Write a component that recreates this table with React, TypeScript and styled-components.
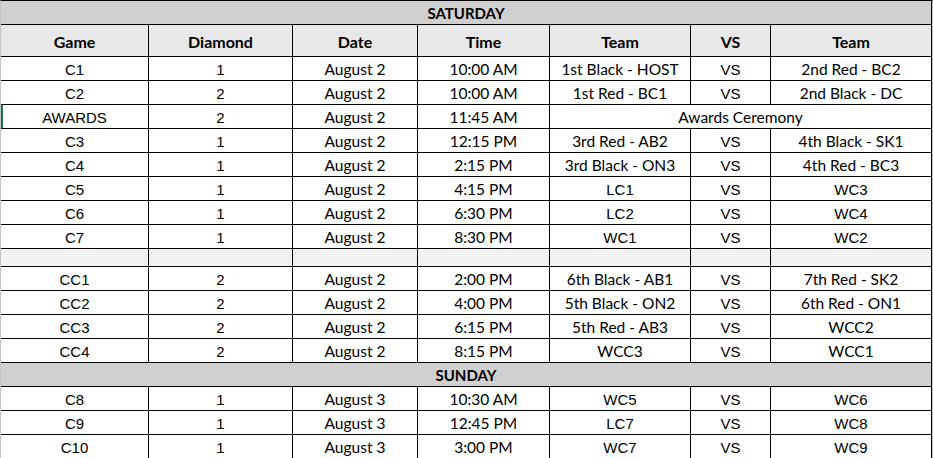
import React from "react";
import styled, { createGlobalStyle, css } from "styled-components";

const Global = createGlobalStyle`
  html, body { margin: 0; padding: 0; background: #ffffff; }
  body { overflow: hidden; }
`;

const APTOS = `"Lato", "Noto Sans", sans-serif`;
const ARIAL = `"Liberation Sans", Arial, sans-serif`;

type Face = "arial" | "aptos";

const Sheet = styled.div`
  display: grid;
  grid-template-columns: 148px 144px 125px 132px 141px 80px 161px;
  width: 933px;
  box-sizing: border-box;
  border-left: 1px solid #c4c4c4;
  border-right: 1px solid #c4c4c4;
  border-top: 1px solid #000;
  color: #000;
`;

const Cell = styled.div<{ $face: Face; $span?: number; $h: number; $mark?: boolean }>`
  box-sizing: border-box;
  height: ${(p) => p.$h}px;
  line-height: ${(p) => p.$h - 1}px;
  border-right: 1px solid #000;
  border-bottom: 1px solid #000;
  text-align: center;
  white-space: nowrap;
  overflow: hidden;
  font-family: ${(p) => (p.$face === "arial" ? ARIAL : APTOS)};
  font-size: ${(p) => (p.$face === "arial" ? "15px" : "15.5px")};
  padding-top: 1px;
  ${(p) => p.$span && css`grid-column: span ${p.$span};`}
  ${(p) =>
    p.$mark &&
    css`
      box-shadow: inset 2px 0 0 #1e7145;
    `}
`;

const Banner = styled.div`
  grid-column: 1 / -1;
  box-sizing: border-box;
  height: 24px;
  line-height: 23px;
  padding-top: 1px;
  background: #d0d0d0;
  border-right: 1px solid #000;
  border-bottom: 1px solid #000;
  text-align: center;
  font-family: ${APTOS};
  font-weight: 700;
  font-size: 15px;
`;

const HeadCell = styled.div`
  box-sizing: border-box;
  height: 32px;
  line-height: 31px;
  padding-top: 1px;
  background: #e8e8e8;
  border-right: 1px solid #000;
  border-bottom: 1px solid #000;
  text-align: center;
  font-family: ${APTOS};
  font-weight: 700;
  font-size: 16px;
`;

const Spacer = styled.div`
  box-sizing: border-box;
  height: 18px;
  background: #f2f2f2;
  border-right: 1px solid #000;
  border-bottom: 1px solid #000;
`;

type C = { t: string; f: Face; span?: number };

const code = (s: string) => /^(LC|WC)\d$/.test(s);

const game = (
  g: string,
  d: string,
  date: string,
  time: string,
  a: string,
  b: string
): C[] => [
  { t: g, f: "arial" },
  { t: d, f: "arial" },
  { t: date, f: "aptos" },
  { t: time, f: "aptos" },
  { t: a, f: code(a) ? "arial" : "aptos" },
  { t: "VS", f: "arial" },
  { t: b, f: code(b) ? "arial" : "aptos" },
];

type Row =
  | { kind: "banner"; label: string }
  | { kind: "head" }
  | { kind: "spacer" }
  | { kind: "data"; cells: C[]; mark?: boolean };

const rows: Row[] = [
  { kind: "banner", label: "SATURDAY" },
  { kind: "head" },
  { kind: "data", cells: game("C1", "1", "August 2", "10:00 AM", "1st Black - HOST", "2nd Red - BC2") },
  { kind: "data", cells: game("C2", "2", "August 2", "10:00 AM", "1st Red - BC1", "2nd Black - DC") },
  {
    kind: "data",
    mark: true,
    cells: [
      { t: "AWARDS", f: "arial" },
      { t: "2", f: "arial" },
      { t: "August 2", f: "aptos" },
      { t: "11:45 AM", f: "aptos" },
      { t: "Awards Ceremony", f: "aptos", span: 3 },
    ],
  },
  { kind: "data", cells: game("C3", "1", "August 2", "12:15 PM", "3rd Red - AB2", "4th Black - SK1") },
  { kind: "data", cells: game("C4", "1", "August 2", "2:15 PM", "3rd Black - ON3", "4th Red - BC3") },
  { kind: "data", cells: game("C5", "1", "August 2", "4:15 PM", "LC1", "WC3") },
  { kind: "data", cells: game("C6", "1", "August 2", "6:30 PM", "LC2", "WC4") },
  { kind: "data", cells: game("C7", "1", "August 2", "8:30 PM", "WC1", "WC2") },
  { kind: "spacer" },
  { kind: "data", cells: game("CC1", "2", "August 2", "2:00 PM", "6th Black - AB1", "7th Red - SK2") },
  { kind: "data", cells: game("CC2", "2", "August 2", "4:00 PM", "5th Black - ON2", "6th Red - ON1") },
  { kind: "data", cells: game("CC3", "2", "August 2", "6:15 PM", "5th Red - AB3", "WCC2") },
  { kind: "data", cells: game("CC4", "2", "August 2", "8:15 PM", "WCC3", "WCC1") },
  { kind: "banner", label: "SUNDAY" },
  { kind: "data", cells: game("C8", "1", "August 3", "10:30 AM", "WC5", "WC6") },
  { kind: "data", cells: game("C9", "1", "August 3", "12:45 PM", "LC7", "WC8") },
  { kind: "data", cells: game("C10", "1", "August 3", "3:00 PM", "WC7", "WC9") },
];

const headers = ["Game", "Diamond", "Date", "Time", "Team", "VS", "Team"];

export default function App() {
  return (
    <>
      <Global />
      <Sheet>
        {rows.map((r, i) => {
          if (r.kind === "banner") return <Banner key={i}>{r.label}</Banner>;
          if (r.kind === "head")
            return (
              <React.Fragment key={i}>
                {headers.map((h, j) => (
                  <HeadCell key={j}>{h}</HeadCell>
                ))}
              </React.Fragment>
            );
          if (r.kind === "spacer")
            return (
              <React.Fragment key={i}>
                {headers.map((_, j) => (
                  <Spacer key={j} />
                ))}
              </React.Fragment>
            );
          return (
            <React.Fragment key={i}>
              {r.cells.map((c, j) => (
                <Cell key={j} $face={c.f} $span={c.span} $h={24} $mark={r.mark && j === 0}>
                  {c.t}
                </Cell>
              ))}
            </React.Fragment>
          );
        })}
      </Sheet>
    </>
  );
}
